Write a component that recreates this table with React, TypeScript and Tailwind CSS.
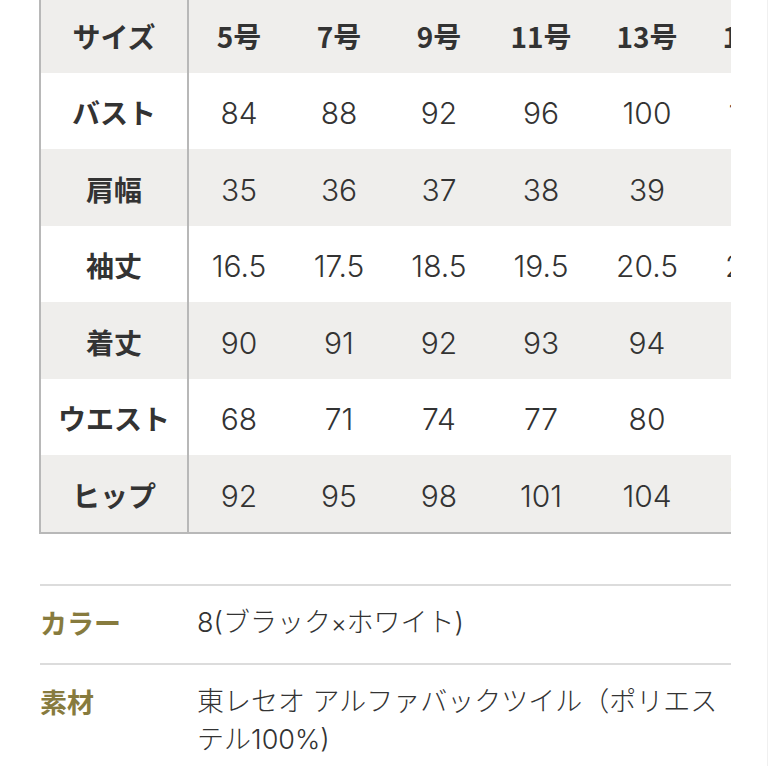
import React from 'react';

interface SizeColumn {
  label: string;
  width: string;
  values: string[];
}

const rowLabels = ['バスト', '肩幅', '袖丈', '着丈', 'ウエスト', 'ヒップ'];

const columns: SizeColumn[] = [
  { label: '5号', width: 'w-[100px]', values: ['84', '35', '16.5', '90', '68', '92'] },
  { label: '7号', width: 'w-[100px]', values: ['88', '36', '17.5', '91', '71', '95'] },
  { label: '9号', width: 'w-[100px]', values: ['92', '37', '18.5', '92', '74', '98'] },
  { label: '11号', width: 'w-[104px]', values: ['96', '38', '19.5', '93', '77', '101'] },
  { label: '13号', width: 'w-[108px]', values: ['100', '39', '20.5', '94', '80', '104'] },
  { label: '15号', width: 'w-[104px]', values: ['104', '40', '21.5', '95', '83', '107'] },
];

const font = "font-['Noto_Sans_CJK_JP','Noto_Sans',sans-serif]";
const numFont = "font-['Inter','Noto_Sans_CJK_JP',sans-serif]";

export default function App() {
  return (
    <div className={`w-[770px] h-[770px] overflow-hidden bg-white text-[#333] ${font}`}>
      <div className="w-[768px] h-full border-r border-[#f0f0f0]">
        <div className="-mt-[4px] ml-[39px] w-[692px] overflow-hidden border-l-2 border-b-2 border-[#b8b8b8]">
          <div className="w-max">
            <div className="flex h-[76.5px] bg-[#efeeec] text-[28px] font-bold">
              <div className="w-[148px] border-r-2 border-[#b8b8b8] flex items-center justify-center pt-[3px]">サイズ</div>
              {columns.map(c => (
                <div key={c.label} className={`${c.width} flex items-center justify-center pt-[3px]`}>{c.label}</div>
              ))}
            </div>
            {rowLabels.map((label, i) => (
              <div key={label} className={`flex h-[76.5px] ${i % 2 === 0 ? 'bg-white' : 'bg-[#efeeec]'}`}>
                <div className="w-[148px] border-r-2 border-[#b8b8b8] flex items-center justify-center pt-[3px] text-[28px] font-bold">{label}</div>
                {columns.map(c => (
                  <div key={c.label} className={`${c.width} ${numFont} flex items-center justify-center pt-[6px] text-[30px] font-light`}>{c.values[i]}</div>
                ))}
              </div>
            ))}
          </div>
        </div>

        {/* spec list */}
        <div className="ml-[40px] w-[691px] mt-[50px] text-[27px]">
          <div className="border-t-2 border-[#dcdcdc] flex pt-[18px] pb-[20px] leading-[38px]">
            <div className="w-[157px] shrink-0 text-[#877b3e] font-bold">カラー</div>
            <div className={`flex-1 font-light ${numFont}`}>8(ブラック<span className="text-[24px]">×</span>ホワイト)</div>
          </div>
          <div className="border-t-2 border-[#dcdcdc] flex pt-[18px] pb-[20px] leading-[38px]">
            <div className="w-[157px] shrink-0 text-[#877b3e] font-bold">素材</div>
            <div className={`flex-1 font-light ${numFont}`}>東レセオ アルファバックツイル（ポリエステル100%)</div>
          </div>
        </div>
      </div>
    </div>
  );
}
